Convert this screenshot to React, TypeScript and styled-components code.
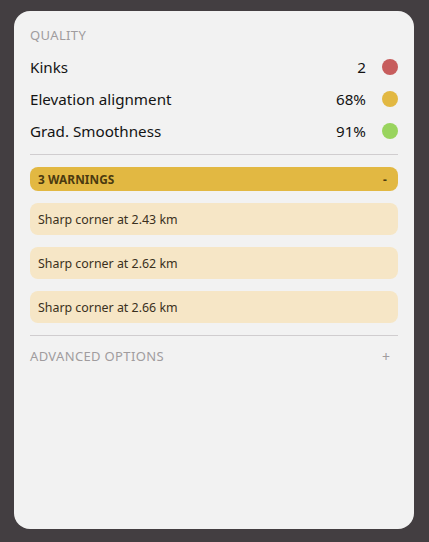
import { createGlobalStyle, styled } from "styled-components";

const GlobalStyle = createGlobalStyle`
  html, body {
    margin: 0;
    background: #433e41;
  }
  body {
    font-family: "Noto Sans", "Liberation Sans", sans-serif;
  }
`;

const Page = styled.div`
  padding: 11px 15px 13px 14px;
  height: 542px;
  box-sizing: border-box;
`;

const Card = styled.div`
  background: #f2f2f2;
  border-radius: 16px;
  height: 518px;
  box-sizing: border-box;
  padding: 16px 16px;
  display: flex;
  flex-direction: column;
`;

const SectionLabel = styled.div`
  font-size: 13px;
  line-height: 16px;
  color: #a09c9e;
  text-transform: uppercase;
  letter-spacing: 0.35px;
`;

const Rows = styled.div`
  margin-top: 8px;
  display: flex;
  flex-direction: column;
`;

const Row = styled.div`
  height: 32px;
  display: flex;
  align-items: center;
  font-size: 15.2px;
  color: #141414;
`;

const RowLabel = styled.span`
  flex: 1;
`;

const RowValue = styled.span`
  margin-right: 16px;
`;

const Dot = styled.span<{ $color: string }>`
  width: 16px;
  height: 16px;
  border-radius: 50%;
  background: ${(p) => p.$color};
`;

const Divider = styled.hr<{ $top: number }>`
  border: 0;
  border-top: 1px solid #d0cdcf;
  margin: ${(p) => p.$top}px 0 12px;
`;

const WarningBar = styled.div`
  height: 24px;
  border-radius: 8px;
  background: #e2b842;
  color: #4a3a10;
  display: flex;
  align-items: center;
  justify-content: space-between;
  padding: 0 11px 0 8px;
  font-size: 11.8px;
  font-weight: 700;
  letter-spacing: 0.1px;
`;

const WarningList = styled.div`
  margin-top: 12px;
  display: flex;
  flex-direction: column;
  gap: 12px;
`;

const WarningItem = styled.div`
  height: 32px;
  border-radius: 8px;
  background: #f6e6c6;
  color: #3a3020;
  display: flex;
  align-items: center;
  padding: 0 8px;
  font-size: 12.4px;
`;

const Collapsible = styled.div`
  display: flex;
  align-items: center;
  justify-content: space-between;
  height: 16px;
  padding-right: 8px;
`;

const Plus = styled.span`
  color: #a09c9e;
  font-size: 14px;
`;

const metrics = [
  { label: "Kinks", value: "2", color: "#c75d5d" },
  { label: "Elevation alignment", value: "68%", color: "#e2b842" },
  { label: "Grad. Smoothness", value: "91%", color: "#99d45e" },
];

const warnings = ["2.43", "2.62", "2.66"];

export default function App() {
  return (
    <Page>
      <GlobalStyle />
      <Card>
        <SectionLabel>Quality</SectionLabel>
        <Rows>
          {metrics.map((m) => (
            <Row key={m.label}>
              <RowLabel>{m.label}</RowLabel>
              <RowValue>{m.value}</RowValue>
              <Dot $color={m.color} />
            </Row>
          ))}
        </Rows>
        <Divider $top={7} />
        <WarningBar>
          <span>3 WARNINGS</span>
          <span>-</span>
        </WarningBar>
        <WarningList>
          {warnings.map((w) => (
            <WarningItem key={w}>Sharp corner at {w} km</WarningItem>
          ))}
        </WarningList>
        <Divider $top={12} />
        <Collapsible>
          <SectionLabel>Advanced options</SectionLabel>
          <Plus>+</Plus>
        </Collapsible>
      </Card>
    </Page>
  );
}
